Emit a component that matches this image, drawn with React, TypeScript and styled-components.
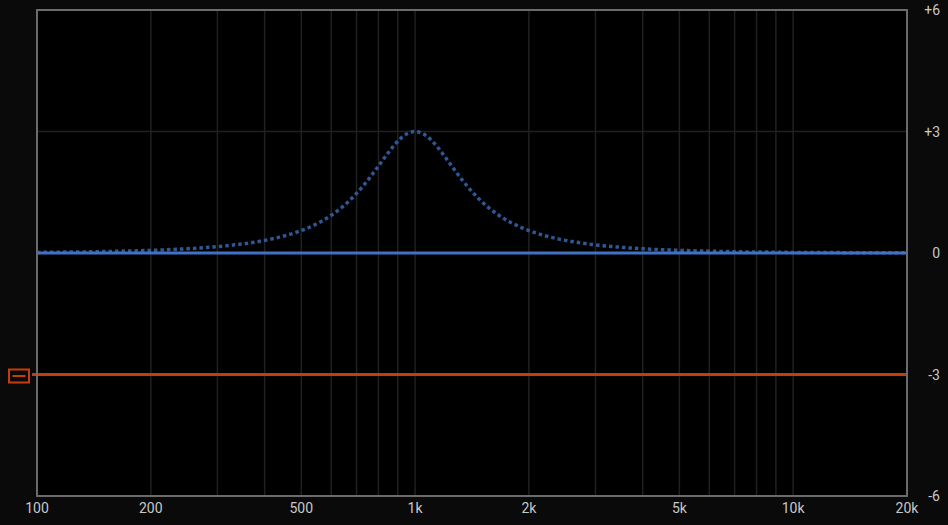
import React from 'react';
import styled, { createGlobalStyle } from 'styled-components';

const Global = createGlobalStyle`
  html, body { margin: 0; padding: 0; background: #0a0a0a; }
  body { font-family: Roboto, "Liberation Sans", sans-serif; }
`;

const Page = styled.div`
  width: 948px;
  height: 525px;
  background: #0a0a0a;
`;

const Chart = styled.svg`
  display: block;
`;

const L = 37, R = 907, T = 10, B = 496;
const W = R - L;
const fx = (f: number) => L + (Math.log10(f / 100) / Math.log10(200)) * W;
const dy = (db: number) => T + ((6 - db) / 12) * (B - T);

const gridFreqs = [200, 300, 400, 500, 600, 700, 800, 900, 1000, 2000, 3000, 4000, 5000, 6000, 7000, 8000, 9000, 10000];
const xLabels: [number, string][] = [[100, '100'], [200, '200'], [500, '500'], [1000, '1k'], [2000, '2k'], [5000, '5k'], [10000, '10k'], [20000, '20k']];
const yLabels: [number, string][] = [[6, '+6'], [3, '+3'], [0, '0'], [-3, '-3'], [-6, '-6']];

// peaking filter shape, +3 dB at 1 kHz
const bell = (f: number) => {
  const q = 1.4;
  const t = q * (f / 1000 - 1000 / f);
  return 3 / (1 + t * t);
};

const curve = (() => {
  const pts: string[] = [];
  for (let i = 0; i <= 400; i++) {
    const f = 100 * Math.pow(200, i / 400);
    pts.push(`${fx(f).toFixed(1)},${dy(bell(f)).toFixed(1)}`);
  }
  return 'M' + pts.join(' L');
})();

const font = "Roboto, 'Liberation Sans', sans-serif";

export default function App() {
  return (
    <Page>
      <Global />
      <Chart width={948} height={525}>
        <rect x={L} y={T} width={W} height={B - T} fill="#000" />
        {gridFreqs.map(f => (
          <line key={f} x1={fx(f)} x2={fx(f)} y1={T} y2={B} stroke="#202020" strokeWidth={1.5} />
        ))}
        {[3, -3].map(d => (
          <line key={d} x1={L} x2={R} y1={dy(d)} y2={dy(d)} stroke="#202020" strokeWidth={1.5} />
        ))}
        <path d={curve} fill="none" stroke="#2e5796" strokeWidth={3.5} strokeDasharray="3.5 3" />
        <line x1={L} x2={R} y1={dy(0)} y2={dy(0)} stroke="#3f72c4" strokeWidth={3} />
        <line x1={32} x2={R} y1={dy(-3)} y2={dy(-3)} stroke="#c63d0c" strokeWidth={3} />
        <rect x={9} y={369.5} width={20} height={13} fill="#0a0a0a" stroke="#c63d0c" strokeWidth={2} />
        <line x1={12.5} x2={25.5} y1={376} y2={376} stroke="#c63d0c" strokeWidth={2} />
        <rect x={L} y={T} width={W} height={B - T} fill="none" stroke="#6b6b6b" strokeWidth={2} />
        {yLabels.map(([d, s]) => (
          <text key={s} x={940} y={dy(d) + 5} fill="#c8c8c8" fontSize={14} textAnchor="end" fontFamily={font}>{s}</text>
        ))}
        {xLabels.map(([f, s]) => (
          <text key={s} x={fx(f)} y={513} fill="#c8c8c8" fontSize={14} textAnchor="middle" fontFamily={font}>{s}</text>
        ))}
      </Chart>
    </Page>
  );
}
